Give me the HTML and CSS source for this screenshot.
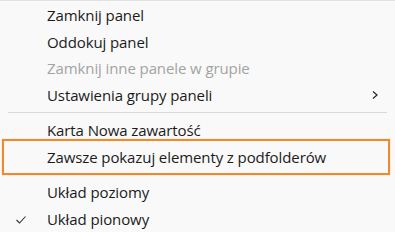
FILE: index.html
```html
<!DOCTYPE html>
<html lang="pl">
<head>
<meta charset="utf-8">
<link rel="stylesheet" href="styles.css">
</head>
<body>
<div class="menu">
  <div class="item">Zamknij panel</div>
  <div class="item">Oddokuj panel</div>
  <div class="item disabled">Zamknij inne panele w grupie</div>
  <div class="item">Ustawienia grupy paneli
    <svg class="chev" width="8" height="10" viewBox="0 0 8 10"><polyline points="2,1.5 6,5 2,8.5" fill="none" stroke="#222" stroke-width="1.2"/></svg>
  </div>
  <div class="sep"></div>
  <div class="item">Karta Nowa zawartość</div>
  <div class="item highlight">Zawsze pokazuj elementy z podfolderów</div>
  <div class="sep"></div>
  <div class="item">Układ poziomy</div>
  <div class="item">
    <svg class="check" width="12" height="10" viewBox="0 0 12 10"><polyline points="1.5,5 4.5,8 10.5,1.5" fill="none" stroke="#333" stroke-width="1.1"/></svg>
    Układ pionowy</div>
</div>
</body>
</html>
```
FILE: styles.css
```css
html, body {
  margin: 0;
  padding: 0;
  background: #f9f9f9;
}
.menu {
  width: 395px;
  height: 232px;
  overflow: hidden;
  box-sizing: border-box;
  border-top: 1px solid #e2e2e2;
  padding-top: 1px;
  font-family: "Open Sans", "Noto Sans", sans-serif;
  font-size: 15px;
  letter-spacing: -0.1px;
  color: #1b1b1b;
}
.item {
  position: relative;
  height: 26.5px;
  line-height: 26.5px;
  padding-left: 47px;
  white-space: nowrap;
}
.item.disabled {
  color: #a3a3a3;
}
.sep {
  height: 9px;
  box-sizing: border-box;
  padding-top: 4px;
  margin: 0 8px;
}
.sep::before {
  content: "";
  display: block;
  height: 1px;
  background: #d9d9d9;
}
.chev {
  position: absolute;
  right: 16px;
  top: 8px;
}
.check {
  position: absolute;
  left: 15px;
  top: 9px;
}
.highlight::after {
  content: "";
  position: absolute;
  top: -4.5px;
  bottom: -5px;
  left: 2px;
  right: 5px;
  border: 2px solid #ef8a2c;
  box-shadow: 0 0 1px rgba(239, 138, 44, 0.5);
}
```
